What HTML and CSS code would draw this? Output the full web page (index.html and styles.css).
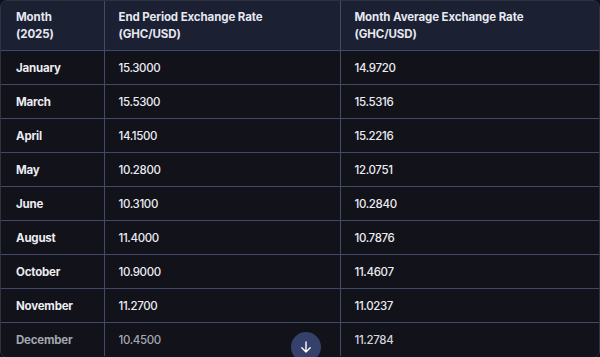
FILE: index.html
```html
<!DOCTYPE html>
<html>
<head>
<meta charset="utf-8">
<link rel="stylesheet" href="styles.css">
</head>
<body>
<div class="wrap">
  <table class="rates">
    <colgroup>
      <col class="c1"><col class="c2"><col class="c3">
    </colgroup>
    <thead>
      <tr>
        <th>Month<br>(2025)</th>
        <th>End Period Exchange Rate<br>(GHC/USD)</th>
        <th>Month Average Exchange Rate<br>(GHC/USD)</th>
      </tr>
    </thead>
    <tbody>
      <tr><td class="m">January</td><td>15.3000</td><td>14.9720</td></tr>
      <tr><td class="m">March</td><td>15.5300</td><td>15.5316</td></tr>
      <tr><td class="m">April</td><td>14.1500</td><td>15.2216</td></tr>
      <tr><td class="m">May</td><td>10.2800</td><td>12.0751</td></tr>
      <tr><td class="m">June</td><td>10.3100</td><td>10.2840</td></tr>
      <tr><td class="m">August</td><td>11.4000</td><td>10.7876</td></tr>
      <tr><td class="m">October</td><td>10.9000</td><td>11.4607</td></tr>
      <tr><td class="m">November</td><td>11.2700</td><td>11.0237</td></tr>
      <tr class="fade"><td class="m">December</td><td>10.4500</td><td>11.2784</td></tr>
    </tbody>
  </table>
  <button class="down" aria-label="Scroll down">
    <svg width="14" height="14" viewBox="0 0 14 14" fill="none" stroke="#ffffff" stroke-width="1.4" stroke-linecap="round" stroke-linejoin="round"><path d="M7 2v10M2.8 7.8L7 12l4.2-4.2"/></svg>
  </button>
</div>
</body>
</html>
```
FILE: styles.css
```css
html, body {
  margin: 0;
  padding: 0;
  background: #0f1017;
}
body {
  font-family: Inter, "Noto Sans", sans-serif;
  color: #ececf1;
  width: 600px;
  height: 357px;
  overflow: hidden;
}
.wrap {
  position: relative;
  height: 356px;
  border: 1px solid #2f3240;
  border-radius: 7px;
  overflow: hidden;
  background: #11121a;
}
.rates {
  width: 100%;
  border-collapse: collapse;
  table-layout: fixed;
}
.c1 { width: 103px; }
.c2 { width: 236px; }
.rates th, .rates td {
  text-align: left;
  padding: 0 14px;
  border-left: 1px solid #414a66;
  border-bottom: 1px solid #414a66;
}
.rates th:first-child, .rates td:first-child {
  border-left: none;
  padding-left: 15px;
}
.rates th {
  background: #1b2033;
  color: #e6e8f0;
  font-weight: 700;
  font-size: 11.5px;
  letter-spacing: -0.1px;
  line-height: 17px;
  height: 49px;
  vertical-align: middle;
}
.rates td {
  height: 33px;
  font-size: 11.5px;
  letter-spacing: -0.35px;
  line-height: 16px;
  font-weight: 500;
  background: #11121a;
}
.rates td.m {
  font-weight: 700;
  letter-spacing: -0.2px;
}
.rates tr.fade td {
  color: #a4a6b0;
  border-bottom: none;
}
.rates tr.fade td:last-child {
  color: #d4d6de;
}
.down {
  position: absolute;
  left: 290px;
  top: 331px;
  width: 30px;
  height: 30px;
  border-radius: 50%;
  border: none;
  padding: 0;
  background: #35416a;
  display: flex;
  align-items: center;
  justify-content: center;
}
```
